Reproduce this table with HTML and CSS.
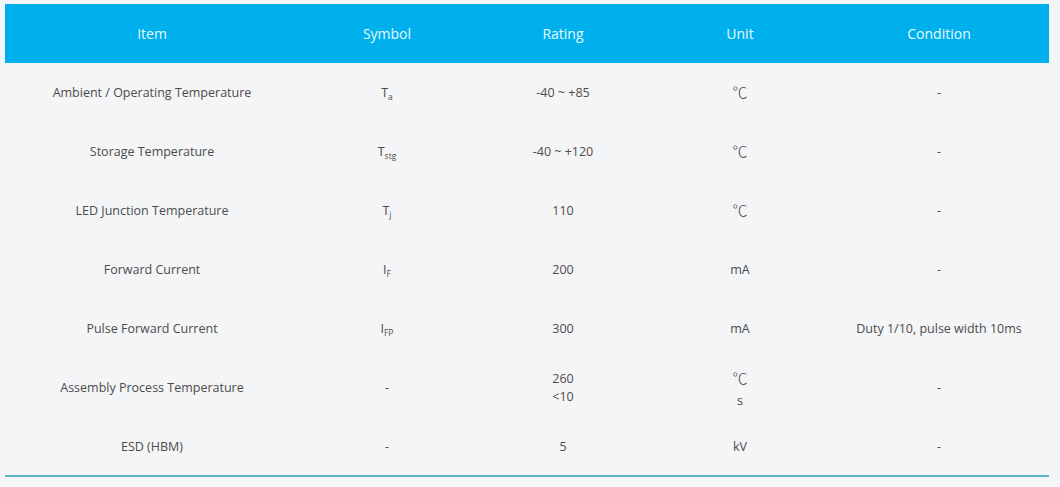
FILE: index.html
```html
<!DOCTYPE html>
<html>
<head>
<meta charset="utf-8">
<link rel="stylesheet" href="styles.css">
</head>
<body>
<div class="page">
<table class="spec">
<colgroup>
<col class="c1"><col class="c2"><col class="c3"><col class="c4"><col class="c5">
</colgroup>
<thead>
<tr><th>Item</th><th>Symbol</th><th>Rating</th><th>Unit</th><th>Condition</th></tr>
</thead>
<tbody>
<tr><td>Ambient / Operating Temperature</td><td>T<sub>a</sub></td><td>-40 ~ +85</td><td><span class="deg">℃</span></td><td>-</td></tr>
<tr><td>Storage Temperature</td><td>T<sub>stg</sub></td><td>-40 ~ +120</td><td><span class="deg">℃</span></td><td>-</td></tr>
<tr><td>LED Junction Temperature</td><td>T<sub>j</sub></td><td>110</td><td><span class="deg">℃</span></td><td>-</td></tr>
<tr><td>Forward Current</td><td>I<sub>F</sub></td><td>200</td><td>mA</td><td>-</td></tr>
<tr><td>Pulse Forward Current</td><td>I<sub>FP</sub></td><td>300</td><td>mA</td><td>Duty 1/10, pulse width 10ms</td></tr>
<tr><td>Assembly Process Temperature</td><td>-</td><td><div class="two">260<br>&lt;10</div></td><td><div class="two unit"><span class="deg">℃</span><br>s</div></td><td>-</td></tr>
<tr class="last"><td>ESD (HBM)</td><td>-</td><td>5</td><td>kV</td><td>-</td></tr>
</tbody>
</table>
</div>
</body>
</html>
```
FILE: styles.css
```css
html, body {
  margin: 0;
  padding: 0;
  background: #f4f5f7;
}
.page {
  padding: 4px 11px 0 5px;
  height: 483px;
}
.spec {
  width: 1044px;
  border-collapse: collapse;
  table-layout: fixed;
  font-family: "Open Sans", "Noto Sans", sans-serif;
  font-size: 12.5px;
  color: #4c4c4c;
}
.c1 { width: 294px; }
.c2 { width: 176px; }
.c3 { width: 176px; }
.c4 { width: 178px; }
.c5 { width: 220px; }
.spec th {
  background: #00b0ec;
  color: #e6f8ff;
  font-weight: normal;
  font-size: 14px;
  height: 59px;
  padding: 0;
  text-align: center;
  vertical-align: middle;
}
.spec td {
  height: 59px;
  padding: 0;
  text-align: center;
  vertical-align: middle;
}
.spec tr.last td {
  height: 58px;
  border-bottom: 2px solid #5cb4c6;
}
.spec sub {
  font-size: 8.5px;
  vertical-align: -3px;
  line-height: 0;
}
.deg {
  font-family: "Noto Sans CJK SC", "Noto Sans", sans-serif;
  font-size: 15px;
  font-weight: 300;
  line-height: 1;
}
.two {
  line-height: 18px;
}
.unit {
  line-height: 21px;
  padding-top: 4px;
}
```
